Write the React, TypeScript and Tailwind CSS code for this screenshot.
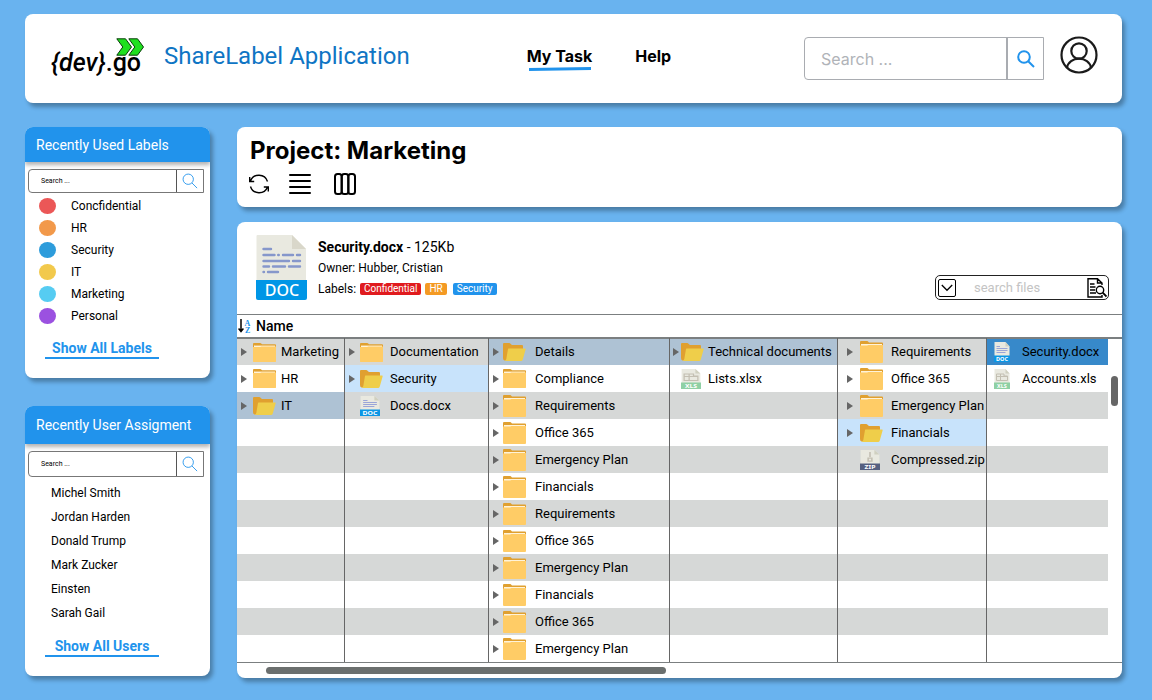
import type { ReactNode } from "react";

const ROWS = 12;

type Kind = "folder" | "open" | "doc" | "xls" | "zip" | "slim";
type Entry = { name: string; kind: Kind; tone?: string };
type Column = { id: string; row: string; gap: string; entries: Entry[]; arrows: boolean; icon: string };

const trail = "bg-[#aec2d4]";
const picked = "bg-[#c8e3fb]";
const active = "bg-[#3789ca]";

const columns: Column[] = [
  {
    id: "Projects",
    row: "pl-1 gap-[6px]",
    gap: "gap-[5px]",
    icon: "w-[23px]",
    arrows: true,
    entries: [
      { name: "Marketing", kind: "slim" },
      { name: "HR", kind: "slim" },
      { name: "IT", kind: "open", tone: trail },
    ],
  },
  {
    id: "IT",
    row: "pl-1 gap-[5px]",
    gap: "gap-[7px]",
    icon: "w-[23px]",
    arrows: true,
    entries: [
      { name: "Documentation", kind: "slim" },
      { name: "Security", kind: "open", tone: picked },
      { name: "Docs.docx", kind: "doc" },
    ],
  },
  {
    id: "Security",
    row: "pl-1 gap-1",
    gap: "gap-[9px]",
    icon: "w-[23px]",
    arrows: true,
    entries: [
      { name: "Details", kind: "open", tone: trail },
      { name: "Compliance", kind: "slim" },
      { name: "Requirements", kind: "folder" },
      { name: "Office 365", kind: "folder" },
      { name: "Emergency Plan", kind: "folder" },
      { name: "Financials", kind: "folder" },
      { name: "Requirements", kind: "folder" },
      { name: "Office 365", kind: "folder" },
      { name: "Emergency Plan", kind: "folder" },
      { name: "Financials", kind: "folder" },
      { name: "Office 365", kind: "folder" },
      { name: "Emergency Plan", kind: "folder" },
    ],
  },
  {
    id: "Details",
    row: "pl-[3px] gap-[2px]",
    gap: "gap-[4px]",
    icon: "w-[23px]",
    arrows: true,
    entries: [
      { name: "Technical documents", kind: "open", tone: trail },
      { name: "Lists.xlsx", kind: "xls" },
    ],
  },
  {
    id: "Technical documents",
    row: "pl-[9px] gap-[7px]",
    gap: "gap-[8px]",
    icon: "w-[23px]",
    arrows: true,
    entries: [
      { name: "Requirements", kind: "folder" },
      { name: "Office 365", kind: "folder" },
      { name: "Emergency Plan", kind: "folder" },
      { name: "Financials", kind: "open", tone: picked },
      { name: "Compressed.zip", kind: "zip" },
    ],
  },
  {
    id: "Financials",
    row: "pl-[7px]",
    gap: "gap-[12px]",
    icon: "w-4",
    arrows: false,
    entries: [
      { name: "Security.docx", kind: "doc", tone: active },
      { name: "Accounts.xls", kind: "xls" },
    ],
  },
];

const labels = [
  { name: "Concfidential", color: "bg-[#eb5757]" },
  { name: "HR", color: "bg-[#f2994a]" },
  { name: "Security", color: "bg-[#2d9cdb]" },
  { name: "IT", color: "bg-[#f2c94c]" },
  { name: "Marketing", color: "bg-[#56ccf2]" },
  { name: "Personal", color: "bg-[#9b51e0]" },
];

const users = ["Michel Smith", "Jordan Harden", "Donald Trump", "Mark Zucker", "Einsten", "Sarah Gail"];

function Folder({ slim }: { slim?: boolean }) {
  return (
    <svg viewBox="0 0 23 22" preserveAspectRatio="none" className={slim ? "h-[19px] w-[23px]" : "h-[22px] w-[23px]"} aria-hidden="true">
      <path d="M0 2V1Q0 0 1 0H7Q8 0 8.500 1L9 1.500H22Q23 1.500 23 2.500V20H0Z" fill="#e0a030" />
      <path d="M1 3H22V5H1Z" fill="#fff3d9" />
      <path d="M0 4.500H7L8.500 4H23V21Q23 22 22 22H1Q0 22 0 21Z" fill="#ffcc66" />
    </svg>
  );
}

function OpenFolder() {
  return (
    <svg viewBox="0 0 23 18" className="h-[18px] w-[23px]" aria-hidden="true">
      <path d="M0 1Q0 0 1 0H6Q7 0 8 1.200L9 2H19Q20 2 20 3V8L3 17.500H1.500Q0 17 0 15Z" fill="#e0a030" />
      <path d="M5.500 5.500H22Q23 5.500 22.600 6.500L19.800 16.500Q19.300 18 18 18H1.500Q3 17.500 3.300 16L5 6Z" fill="#efce4a" />
    </svg>
  );
}

const bands = { doc: "#0b96e5", xls: "#8fd0a4", zip: "#556080" };

function FileIcon({ kind }: { kind: "doc" | "xls" | "zip" }) {
  return (
    <svg viewBox="0 0 32 40" preserveAspectRatio="none" className="h-5 w-full max-w-5" aria-hidden="true">
      <path d="M1 0H23L31 9V40H1Z" fill="#e9e9e0" />
      <path d="M23 0L31 9H23Z" fill="#d0d0c0" />
      <path d="M0 27H32V40H0Z" fill={bands[kind]} />
      {kind === "doc" && <path d="M5 9H12M5 13H27M5 17H27M5 21H23" stroke="#9aa5d8" strokeWidth="2" />}
      {kind === "xls" && (
        <path d="M5 10H20V14H27V23H5ZM5 15H27M13 10V23" fill="none" stroke="#c3bfb2" strokeWidth="2" />
      )}
      {kind === "zip" && <path d="M16 4V14M13 16H19V22H13Z" fill="none" stroke="#c3bfb2" strokeWidth="2.500" />}
      <text x="16" y="37.500" textAnchor="middle" fontSize="11" fontWeight="700" fill="#fff" fontFamily="Noto Sans, sans-serif">
        {kind.toUpperCase()}
      </text>
    </svg>
  );
}

function EntryIcon({ kind }: { kind: Kind }) {
  if (kind === "folder" || kind === "slim") return <Folder slim={kind === "slim"} />;
  if (kind === "open") return <OpenFolder />;
  return <FileIcon kind={kind} />;
}

function Magnifier({ className, stroke }: { className: string; stroke: number }) {
  return (
    <svg viewBox="0 0 18 18" className={className} fill="none" stroke="#2193ec" strokeWidth={stroke} aria-hidden="true">
      <circle cx="7" cy="7" r="5.800" />
      <path d="M11.200 11.200L17 17" />
    </svg>
  );
}

function Logo() {
  return (
    <div className="flex w-[93px] flex-col pb-1">
      <svg viewBox="0 0 28 18" className="h-[18px] w-7 self-end" fill="#1fe01f" stroke="#0a3d0a" strokeWidth="1" aria-hidden="true">
        <path d="M.8.800H9.500L15.500 9L9.500 17.200H.8L6.800 9Z" />
        <path d="M12.800.800H21.500L27.500 9L21.500 17.200H12.800L18.800 9Z" />
      </svg>
      <span className="-mt-[5px] text-[25px] leading-6 font-medium whitespace-nowrap">
        <i>{"{dev}"}</i>.go
      </span>
    </div>
  );
}

function SidePanel({
  title,
  head,
  box,
  search,
  link,
  children,
}: {
  title: string;
  head: string;
  box: string;
  search: string;
  link: string;
  children: ReactNode;
}) {
  return (
    <section className="overflow-hidden rounded-lg bg-white pb-[19px] shadow-[3px_4px_4px_rgba(0,0,0,0.3)]">
      <h2 className={`flex items-center bg-[#2193ec] px-[11px] text-sm text-white shadow-[0_3px_4px_rgba(0,0,0,0.3)] ${head}`}>
        {title}
      </h2>
      <div className={`mt-[7px] mr-[6px] ml-[3px] flex rounded-l border border-[#777] ${box}`}>
        <input
          aria-label={search}
          placeholder="Search ..."
          className="min-w-0 flex-1 pl-3 text-[7px] outline-none placeholder:text-black"
        />
        <button aria-label={search} className="flex w-[27px] items-center justify-center border-l border-[#555]">
          <Magnifier className="size-4" stroke={1} />
        </button>
      </div>
      {children}
      <a
        href="#"
        className="mr-auto ml-5 block w-[114px] border-b-2 border-[#2193ec] text-center text-sm leading-[18px] font-bold text-[#2193ec]"
      >
        {link}
      </a>
    </section>
  );
}

function Header() {
  return (
    <header className="flex h-[89px] items-center rounded-lg bg-white pr-6 pl-[26px] shadow-[3px_4px_4px_rgba(0,0,0,0.3)]">
      <Logo />
      <h1 className="ml-5 pb-[6px] text-2xl whitespace-nowrap text-[#0f75c4]">ShareLabel Application</h1>
      <nav className="ml-[117px] flex gap-[43px] pb-[6px] font-[Inter,sans-serif] text-base leading-6 font-bold whitespace-nowrap">
        <a href="#" className="relative">
          My Task
          <svg viewBox="0 0 62 4" className="absolute top-[23px] left-[2px] h-1 w-[62px]" aria-hidden="true">
            <path d="M0 1L62 0V3L0 4Z" fill="#2193ec" />
          </svg>
        </a>
        <a href="#">Help</a>
      </nav>
      <div className="ml-auto flex h-[43px] w-60 rounded-l border border-[#a9acb1]">
        <input
          aria-label="Search the site"
          placeholder="Search ..."
          className="min-w-0 flex-1 pl-4 font-[Inter,sans-serif] text-base outline-none placeholder:text-[#b0b3b8]"
        />
        <button aria-label="Search" className="flex w-[37px] items-center justify-center border-l-2 border-[#a9acb1]">
          <Magnifier className="size-[18px]" stroke={2} />
        </button>
      </div>
      <button aria-label="Account" className="ml-4 pb-[7px]">
        <svg viewBox="0 0 38 38" className="size-[38px]" fill="none" stroke="#1a1a1a" strokeWidth="2.200" aria-hidden="true">
          <circle cx="19" cy="19" r="17.500" />
          <circle cx="19" cy="15" r="7.700" />
          <path d="M7 31.500C8 26 13 22.700 19 22.700S30 26 31 31.500" />
        </svg>
      </button>
    </header>
  );
}

function ProjectBar() {
  return (
    <section className="flex h-20 flex-col rounded-lg bg-white px-3 pt-2 shadow-[3px_4px_4px_rgba(0,0,0,0.3)]">
      <h2 className="pl-px font-[Inter,sans-serif] text-2xl leading-8 font-bold">Project: Marketing</h2>
      <div className="mt-[6px] flex items-center">
        <button aria-label="Refresh">
          <svg viewBox="0 0 20 20" className="size-5" fill="none" stroke="#000" strokeWidth="1.400" aria-hidden="true">
            <path d="M18.500 7.500A9 9 0 0 0 1.500 7M.7 3V7.500H5.200M1.500 12.500A9 9 0 0 0 18.500 13M19.300 17.500V13H14.800" />
          </svg>
        </button>
        <button aria-label="List view" className="ml-5">
          <svg viewBox="0 0 22 22" className="size-[22px]" fill="none" stroke="#000" strokeWidth="2" strokeLinecap="round" aria-hidden="true">
            <path d="M1 2H21M1 8H21M1 14H21M1 20H21" />
          </svg>
        </button>
        <button aria-label="Column view" className="ml-[23px]">
          <svg viewBox="0 0 22 22" className="size-[22px]" fill="none" stroke="#000" strokeWidth="2" aria-hidden="true">
            <rect x="1" y="1" width="6.700" height="20" rx="2.500" />
            <rect x="7.700" y="1" width="6.700" height="20" rx="2.500" />
            <rect x="14.300" y="1" width="6.700" height="20" rx="2.500" />
          </svg>
        </button>
      </div>
    </section>
  );
}

function FileSummary() {
  return (
    <div className="flex h-[92px] pr-[13px] pl-[19px]">
      <svg viewBox="0 0 51 65" className="mt-[13px] h-[65px] w-[51px]" aria-hidden="true">
        <path d="M1.500 0H36L50 14V50H.5V1Q.5 0 1.500 0Z" fill="#e9e9e0" />
        <path d="M36 0L50 14H36Z" fill="#d9d7ca" />
        <path d="M0 45H51V63Q51 65 49 65H2Q0 65 0 63Z" fill="#0096e6" />
        <path
          d="M7.500 14H15M7.500 20H18.500M22.200 20H22.800M27 20H37M41 20H44M7.500 26H33M37 26H44M7.500 31.500H13M17 31.500H29M33 31.500H44M7.500 37H8M12 37H22"
          stroke="#8697cb"
          strokeWidth="2.400"
          strokeLinecap="round"
        />
        <text x="26" y="61" textAnchor="middle" fontSize="16" fontWeight="500" fill="#fff" fontFamily="Noto Sans, sans-serif">
          DOC
        </text>
      </svg>
      <div className="mt-[15px] ml-[11px] text-xs">
        <p className="text-sm leading-5">
          <b>Security.docx</b> - 125Kb
        </p>
        <p className="leading-[22px]">Owner: Hubber, Cristian</p>
        <p className="flex items-center leading-5 whitespace-nowrap">
          Labels:
          <span className="ml-1 rounded-xs bg-[#e01b1e] px-1 text-[10px] leading-3 text-white">Confidential</span>
          <span className="ml-1 rounded-xs bg-[#f49a23] px-1 text-[10px] leading-3 text-white">HR</span>
          <span className="ml-[6px] rounded-xs bg-[#2193ec] px-1 text-[10px] leading-3 text-white">Security</span>
        </p>
      </div>
      <div className="mt-[53px] ml-auto flex h-[25px] w-[174px] items-center rounded-[5px] border border-[#222] pr-px pl-[2px]">
        <button aria-label="Search options" className="flex size-[18px] items-center justify-center rounded-xs border border-black">
          <svg viewBox="0 0 12 8" className="h-2 w-3" fill="none" stroke="#000" strokeWidth="1.300" aria-hidden="true">
            <path d="M.8 1L6 6.300L11.200 1" />
          </svg>
        </button>
        <input
          aria-label="Search files"
          placeholder="search files"
          className="min-w-0 flex-1 pl-[18px] text-[13px] outline-none placeholder:text-[#c4c4c4]"
        />
        <button aria-label="Find in files">
          <svg viewBox="0 0 20 20" className="size-5" fill="none" stroke="#000" strokeWidth="1.400" aria-hidden="true">
            <path d="M15 7V5L10.500.800H1V19H15V17M10.500.800V5H15M3 6H7.500M3 9H8.500M3 12H8M3 15H9" />
            <circle cx="13" cy="12" r="3.700" />
            <path d="M15.700 14.700L19.500 18.500" strokeWidth="1.800" />
          </svg>
        </button>
      </div>
    </div>
  );
}

function BrowserColumn({ column, last }: { column: Column; last: boolean }) {
  return (
    <ul aria-label={column.id} className={last ? "min-w-0" : "min-w-0 border-r border-[#666]"}>
      {Array.from({ length: ROWS }, (_, i) => {
        const entry = column.entries[i];
        const tone = entry?.tone ?? (i % 2 === 0 ? "bg-[#d6d8d7]" : "bg-white");
        const isFolder = entry && (entry.kind === "folder" || entry.kind === "slim" || entry.kind === "open");
        return (
          <li key={i} className={`h-[27px] border-[#7b7f80] first:border-t ${tone}`}>
            {entry && (
              <button className={`flex h-full w-full items-center whitespace-nowrap ${column.row}`}>
                {column.arrows && (
                  <svg viewBox="0 0 6 8" className="h-2 w-[6px] shrink-0" aria-hidden="true">
                    {isFolder && <path d="M0 0L6 4L0 8Z" fill="#666" />}
                  </svg>
                )}
                <span className={`flex items-center ${column.gap}`}>
                  <span className={`flex shrink-0 ${column.icon}`}>
                    <EntryIcon kind={entry.kind} />
                  </span>
                  <span>{entry.name}</span>
                </span>
              </button>
            )}
          </li>
        );
      })}
    </ul>
  );
}

function FilesPanel() {
  return (
    <section className="mt-[15px] overflow-hidden rounded-lg bg-white shadow-[3px_4px_4px_rgba(0,0,0,0.3)]">
      <FileSummary />
      <button className="flex h-6 w-full items-center gap-[5px] border-y border-[#7b7f80] pl-px text-sm font-medium">
        <svg viewBox="0 0 13 14" className="h-[14px] w-[13px]" aria-hidden="true">
          <path d="M3 0V12M.6 9.500L3 12.500L5.400 9.500" fill="none" stroke="#000" strokeWidth="1.500" />
          <text x="6.500" y="6.500" fontSize="8" fontWeight="700" fill="#2193ec" fontFamily="Liberation Serif, serif">
            A
          </text>
          <text x="7" y="13.500" fontSize="8" fontWeight="700" fill="#2193ec" fontFamily="Liberation Serif, serif">
            Z
          </text>
        </svg>
        Name
      </button>
      <div className="flex border-b border-[#7b7f80]">
        <div className="grid min-w-0 flex-1 grid-cols-[108fr_144fr_181fr_168fr_149fr_121fr] text-[13px]">
          {columns.map((column, i) => (
            <BrowserColumn key={column.id} column={column} last={i === columns.length - 1} />
          ))}
        </div>
        <div className="w-[14px] border-t border-[#7b7f80] pt-[37px] pl-[3px]">
          <div className="h-[30px] w-[7px] rounded-full bg-[#666]" />
        </div>
      </div>
      <div className="flex h-[15px] items-center pl-[29px]">
        <div className="h-[7px] w-[400px] rounded-full bg-[#6b6f6e]" />
      </div>
    </section>
  );
}

export default function App() {
  return (
    <div className="min-h-screen bg-[#69b3ef] pt-[14px] pr-[30px] pb-[22px] pl-[25px] font-[Roboto,sans-serif] text-black">
      <Header />
      <div className="mt-6 flex items-start gap-[27px]">
        <aside className="flex w-[185px] shrink-0 flex-col gap-7">
          <SidePanel title="Recently Used Labels" head="h-[35px]" box="h-6" search="Search labels" link="Show All Labels">
            <ul className="mt-[2px] mb-3 pl-[14px] text-xs">
              {labels.map((label) => (
                <li key={label.name} className="flex h-[22px] items-center gap-[15px]">
                  <span className={`h-4 w-[17px] rounded-[50%] ${label.color}`} />
                  {label.name}
                </li>
              ))}
            </ul>
          </SidePanel>
          <SidePanel title="Recently User Assigment" head="h-[38px]" box="h-[26px]" search="Search users" link="Show All Users">
            <ul className="mt-1 mb-3 pl-[26px] text-xs">
              {users.map((user) => (
                <li key={user} className="flex h-6 items-center">
                  {user}
                </li>
              ))}
            </ul>
          </SidePanel>
        </aside>
        <main className="min-w-0 flex-1">
          <ProjectBar />
          <FilesPanel />
        </main>
      </div>
    </div>
  );
}
